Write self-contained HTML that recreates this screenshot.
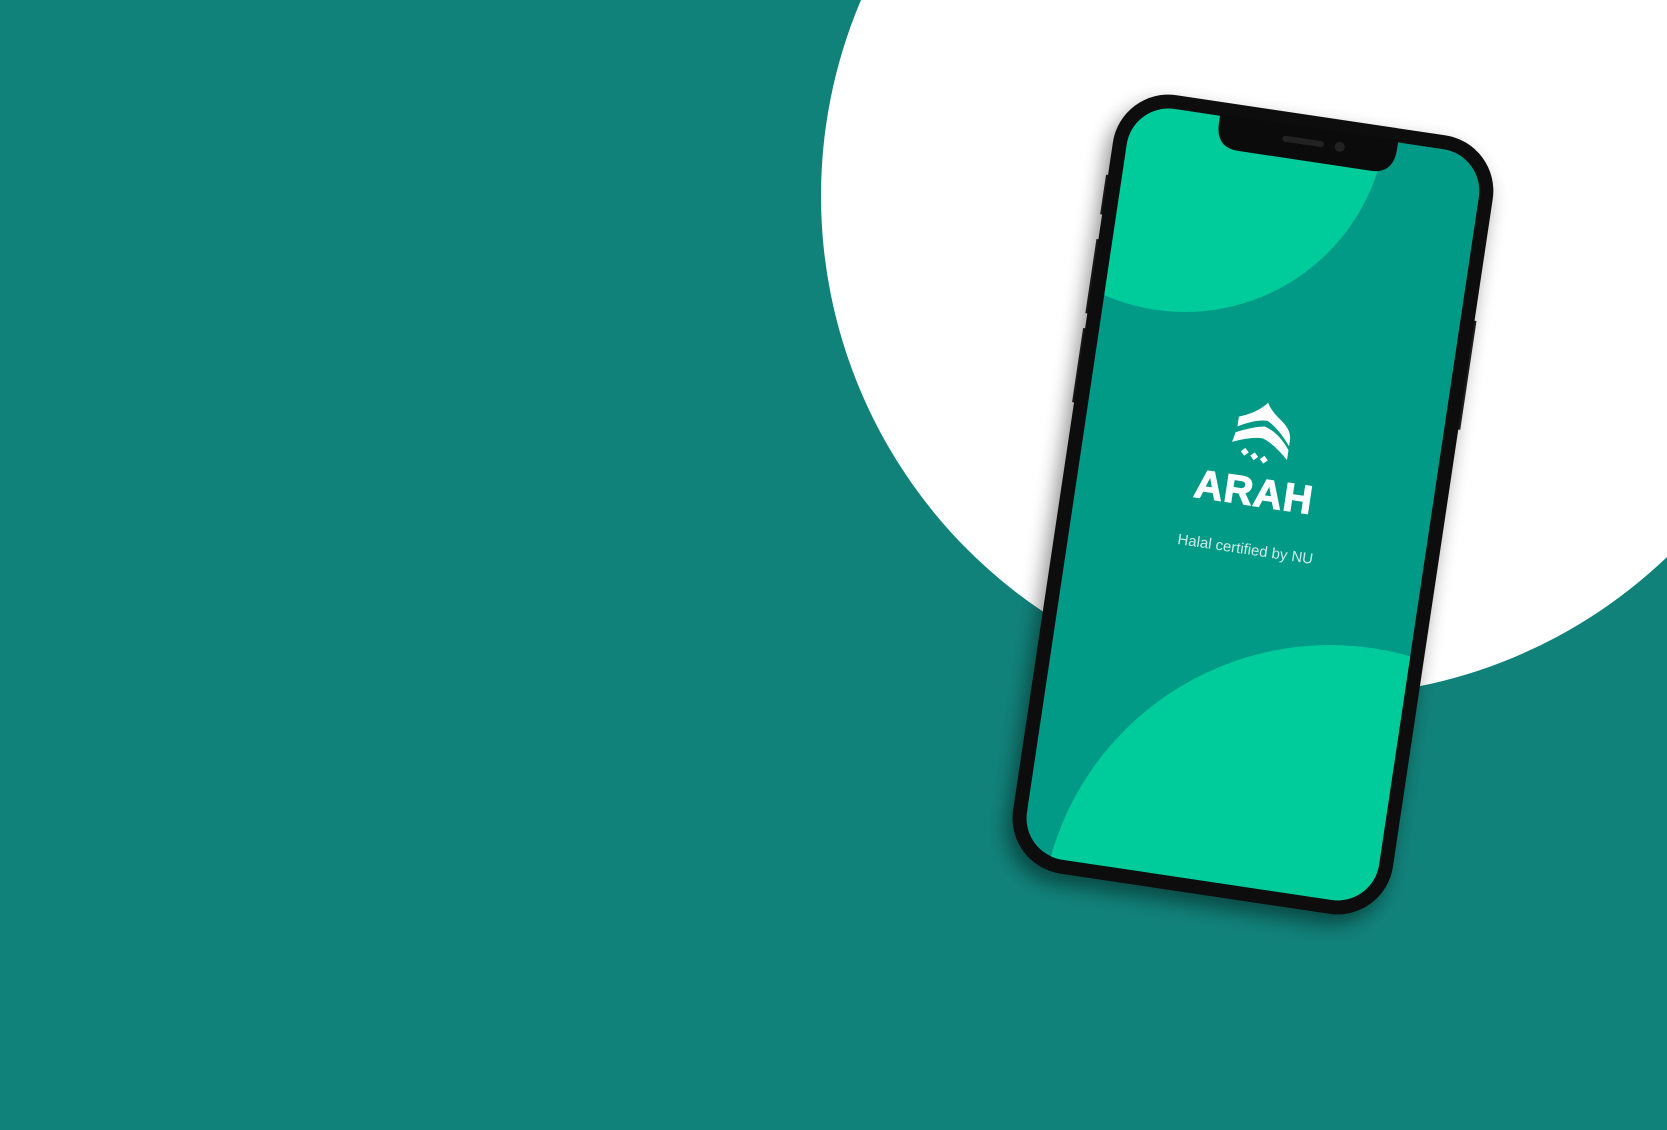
<!DOCTYPE html>
<html><head><meta charset="utf-8"><style>
html,body{margin:0;padding:0;width:1667px;height:1130px;overflow:hidden;background:#11827a}
svg{display:block}
</style></head><body>
<svg width="1667" height="1130" viewBox="0 0 1667 1130" xmlns="http://www.w3.org/2000/svg">
<defs>
<filter id="sh" x="-30%" y="-30%" width="160%" height="160%">
<feGaussianBlur in="SourceAlpha" stdDeviation="10"/>
<feOffset dx="-6" dy="10"/>
<feComponentTransfer><feFuncA type="linear" slope="0.45"/></feComponentTransfer>
<feMerge><feMergeNode/><feMergeNode in="SourceGraphic"/></feMerge>
</filter>
<clipPath id="scr">
<rect x="1075" y="125" width="356" height="759" rx="42" transform="rotate(8.5 1253 504)"/>
</clipPath>
</defs>
<rect width="1667" height="1130" fill="#11827a"/>
<circle cx="1321" cy="196" r="500" fill="#ffffff"/>
<g transform="rotate(8.5 1253 504)" fill="#222">
<rect x="1059" y="200" width="3" height="40" />
<rect x="1059" y="265" width="3" height="75" />
<rect x="1059" y="355" width="3" height="75" />
<rect x="1444" y="290" width="3" height="110" />
</g>
<g filter="url(#sh)">
<rect x="1061" y="111" width="384" height="787" rx="56" fill="#0b0b0b" transform="rotate(8.5 1253 504)"/>
</g>
<g clip-path="url(#scr)">
<rect x="900" y="0" width="700" height="1000" fill="#019a87"/>
<circle cx="1185" cy="110" r="202" fill="#00cb9a"/>
<circle cx="1330" cy="935" r="290" fill="#00cb9a"/>
</g>
<g transform="rotate(8.5 1253 504)">
<path d="M1163 123 H1343 V132 Q1343 157 1320 157 H1186 Q1163 157 1163 132 Z" fill="#0b0b0b"/>
<rect x="1228" y="135" width="42" height="6" rx="3" fill="#222"/>
<circle cx="1286" cy="138" r="5" fill="#222"/>
</g>
<g transform="rotate(8.5 1259 458)">
<g fill="#fff">
<path d="M1233 420 Q1250 414 1260 402 Q1264 410 1276 418 Q1287 426 1287 436 L1287 442 Q1274 426 1262 420 Q1250 420 1233 430 Z"/>
<path d="M1232 436 Q1248 428 1260 426 Q1275 430 1287 446 L1287 456 Q1272 442 1260 438 Q1248 438 1230 446 Z"/>
<path d="M1244 450 l4 4 l-4 4 l-4 -4 Z"/>
<path d="M1254 453 l4 4 l-4 4 l-4 -4 Z"/>
<path d="M1264 455 l4 4 l-4 4 l-4 -4 Z"/>
</g>
<text x="1259" y="506" text-anchor="middle" font-family="Liberation Sans, sans-serif" font-weight="bold" font-size="40" fill="#fff" stroke="#fff" stroke-width="1.2" letter-spacing="1">ARAH</text>
<text x="1259" y="555" text-anchor="middle" font-family="Liberation Sans, sans-serif" font-size="15" fill="#cdebe6">Halal certified by NU</text>
</g>
</svg>
</body></html>
